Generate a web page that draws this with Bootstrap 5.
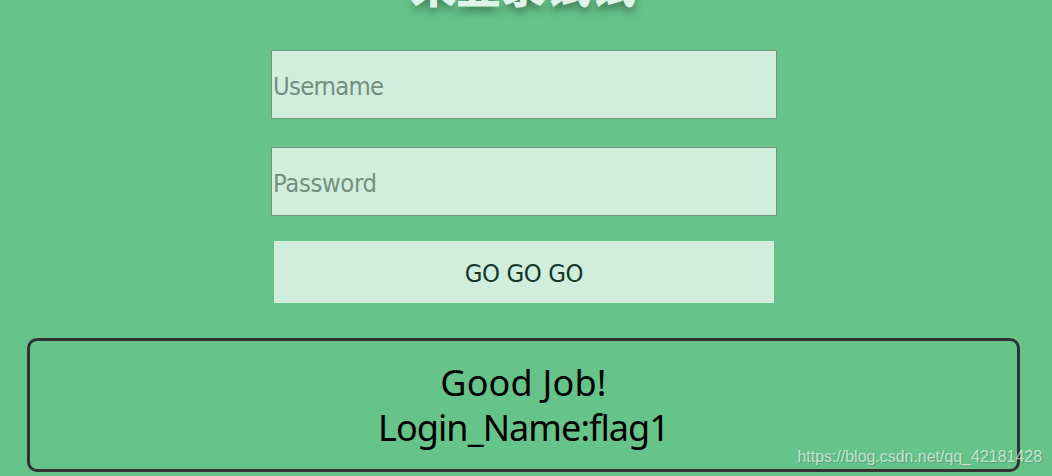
<!DOCTYPE html>
<html lang="zh">
<head>
<meta charset="utf-8">
<meta name="viewport" content="width=device-width, initial-scale=1">
<title>Login</title>
<link href="https://cdn.jsdelivr.net/npm/bootstrap@5.3.0/dist/css/bootstrap.min.css" rel="stylesheet">
<style>
body{background:#66c48a;height:476px;overflow:hidden}
.title{font:bold 45px/60px "Noto Sans CJK SC",sans-serif;color:#e0f3e8;-webkit-text-stroke:1px #e0f3e8;text-shadow:0 5px 10px rgba(0,0,0,.45);margin-top:-46px;height:96px;white-space:nowrap;padding-right:5px}
.login-form{width:506px;margin-left:271px}
.field{height:69px;border:1px solid #6f9580;background:#d1eedc;padding:2px 1px 0;font:25.4px "DejaVu Sans Condensed",sans-serif;letter-spacing:-.75px;color:#15382a;border-radius:0}
.field-password{letter-spacing:-.35px;margin-top:28px}
.field::placeholder{color:#738f80;opacity:1}
.go-btn{width:500px;height:62px;margin-top:25px;padding:2px 0 0;background:#d1eedc;color:#15382a;font:25.4px "DejaVu Sans Condensed",sans-serif;letter-spacing:-.4px;border:0}
.result{margin:35px 32px 0 27px;height:134px;border:3px solid #333;border-radius:10px;color:#000;font:36px/45px "Noto Sans",sans-serif;padding-top:19px}
.line1{letter-spacing:.2px}
.line2{letter-spacing:-.95px}
.watermark{position:absolute;right:10px;bottom:8px;font:16px/22px "Liberation Sans",sans-serif;letter-spacing:-.03px;color:rgba(255,255,255,.65);text-shadow:1px 1px 1px rgba(0,0,0,.2)}
</style>
</head>
<body>
<main>
<h1 class="title text-center mb-0"><span>来登录试试</span></h1>
<form class="login-form d-flex flex-column">
<input class="field w-100" type="text" placeholder="Username" aria-label="Username">
<input class="field field-password w-100" type="password" placeholder="Password" aria-label="Password">
<button class="go-btn align-self-center" type="button"><span>GO GO GO</span></button>
</form>
<div class="result text-center"><span class="line1">Good Job!</span><br><span class="line2">Login_Name:flag1</span></div>
</main>
<div class="watermark">https://blog.csdn.net/qq_42181428</div>
<script src="https://cdn.jsdelivr.net/npm/bootstrap@5.3.0/dist/js/bootstrap.bundle.min.js"></script>
</body>
</html>
